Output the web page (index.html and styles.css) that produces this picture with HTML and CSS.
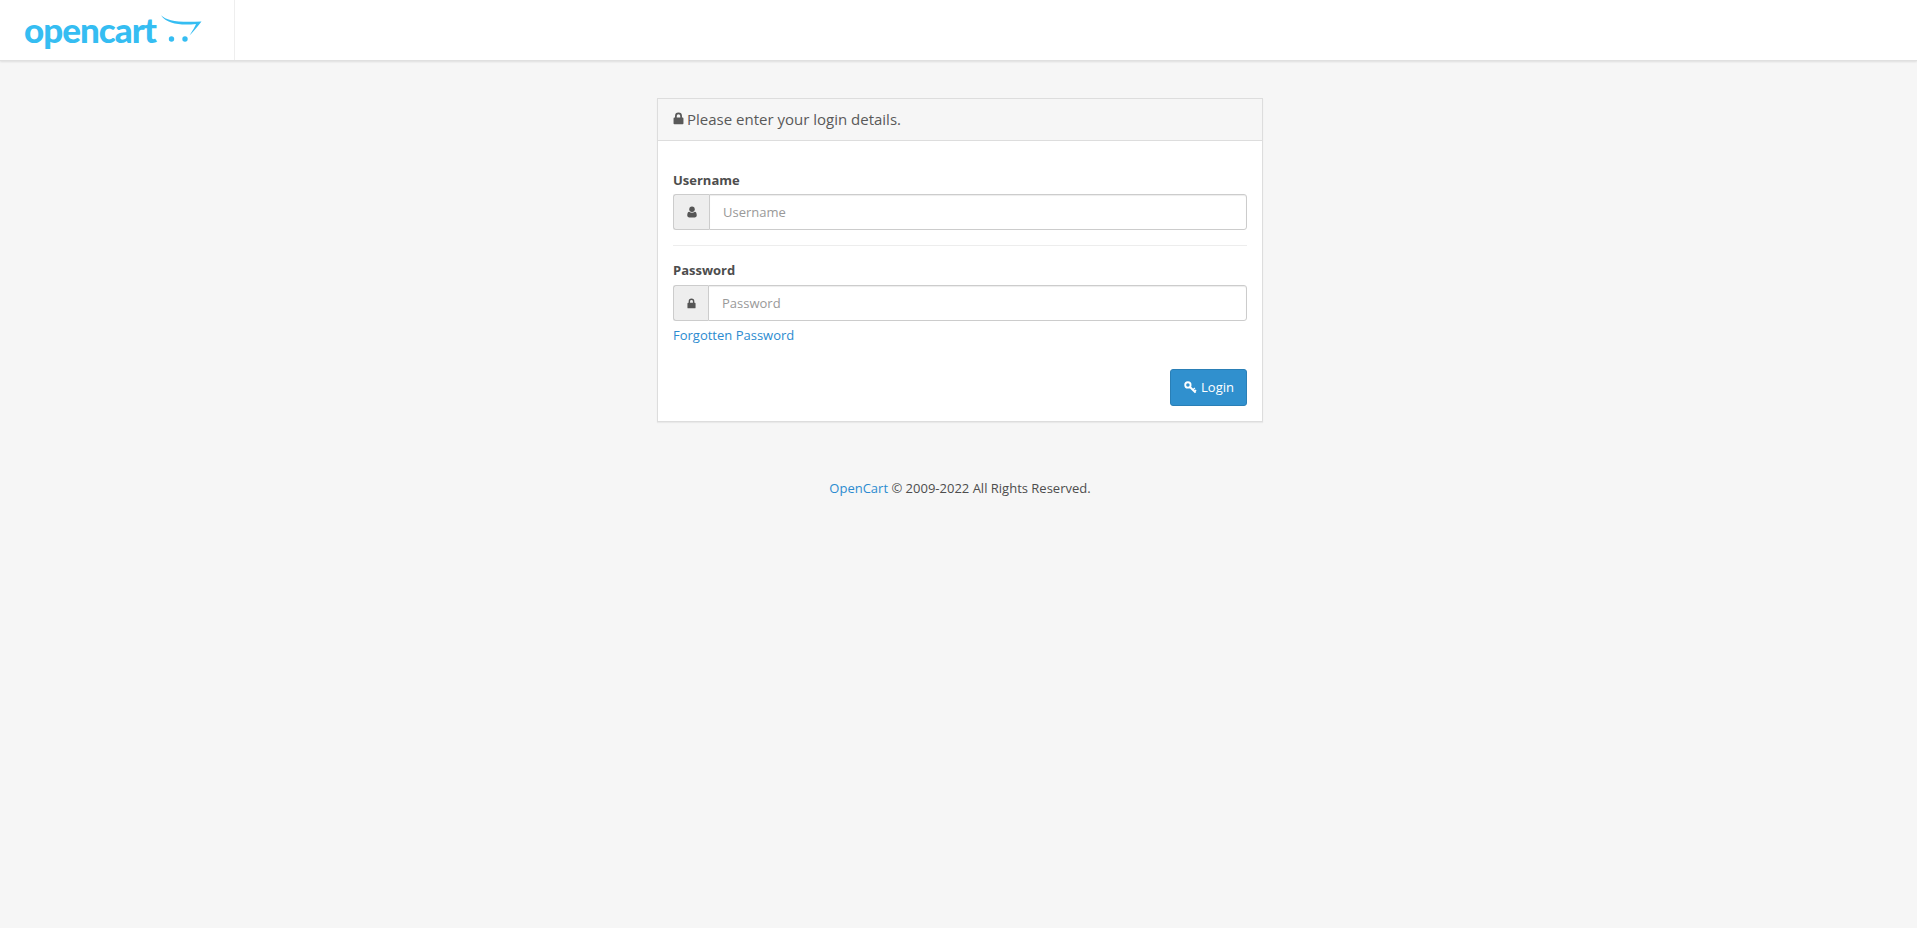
FILE: index.html
```html
<!DOCTYPE html>
<html lang="en">
<head>
<meta charset="utf-8">
<title>OpenCart - Administration</title>
<link rel="stylesheet" href="styles.css">
</head>
<body>
<header class="topbar">
  <a class="brand" href="#">
    <span class="brand-text">opencart</span>
    <svg class="brand-cart" viewBox="0 0 42 30" width="42" height="30" aria-hidden="true">
      <path d="M1 0.3C7 6 17 7.500 41.500 6.500C36.500 13 32.500 17.500 29.500 20.500C32.500 15.500 35 12 36 9C22 10.500 7 9.500 1 0.300Z" fill="#35bdf2"/>
      <circle cx="11.500" cy="24" r="2.700" fill="#35bdf2"/>
      <circle cx="25" cy="24" r="2.700" fill="#35bdf2"/>
    </svg>
  </a>
</header>
<main class="content">
  <section class="card">
    <h1 class="card-head">
      <svg class="icon icon-head" viewBox="0 0 12 14" aria-hidden="true"><path fill-rule="evenodd" d="M2.200 6V4.200a3.800 3.800 0 0 1 7.600 0V6h.7c.5 0 .9.4.9.9v5.600c0 .5-.4.9-.9.9h-9c-.5 0-.9-.4-.9-.9V6.900c0-.5.4-.9.9-.9zM4.100 6h3.800V4.200a1.900 1.900 0 0 0-3.800 0z"/></svg>
      Please enter your login details.
    </h1>
    <form class="card-body">
      <div class="field field-user">
        <label class="field-label" for="u">Username</label>
        <div class="input-group">
          <span class="addon addon-user">
            <svg class="icon icon-user" viewBox="0 0 12 14" aria-hidden="true"><circle cx="6" cy="3.600" r="3.300"/><path d="M2.600 6.700C3.500 7.600 4.700 8 6 8s2.500-.4 3.400-1.300c1.500.2 2.300 1.800 2.300 4.300 0 1.700-1 2.600-2.500 2.600H2.800C1.300 13.600.3 12.700.3 11c0-2.500.8-4.100 2.300-4.300z"/></svg>
          </span>
          <input class="text-input" id="u" type="text" placeholder="Username">
        </div>
      </div>
      <div class="field field-pass">
        <label class="field-label" for="p">Password</label>
        <div class="input-group">
          <span class="addon addon-pass">
            <svg class="icon icon-small" viewBox="0 0 12 14" aria-hidden="true"><path fill-rule="evenodd" d="M2.200 6V4.200a3.800 3.800 0 0 1 7.600 0V6h.7c.5 0 .9.4.9.9v5.600c0 .5-.4.9-.9.9h-9c-.5 0-.9-.4-.9-.9V6.900c0-.5.4-.9.9-.9zM4.100 6h3.800V4.200a1.900 1.900 0 0 0-3.800 0z"/></svg>
          </span>
          <input class="text-input" id="p" type="password" placeholder="Password">
        </div>
        <a class="link forgot" href="#">Forgotten Password</a>
      </div>
      <div class="actions">
        <button class="btn" type="button">
          <svg class="icon icon-key" viewBox="0 0 14 14" aria-hidden="true"><g fill="none" stroke="currentColor"><circle cx="4.200" cy="4.200" r="2.900" stroke-width="2"/><path d="M6.400 6.400L12.500 12.500" stroke-width="2.100"/><path d="M9.600 9.600L11.600 7.600M11.300 11.300L13 9.600" stroke-width="1.500"/></g></svg>
          Login
        </button>
      </div>
    </form>
  </section>
  <footer class="footer"><a class="link" href="#">OpenCart</a> © 2009-2022 All Rights Reserved.</footer>
</main>
</body>
</html>
```
FILE: styles.css
```css
* { box-sizing: border-box; }
html, body { height: 100%; }
body {
  margin: 0;
  background: #f6f6f6;
  color: #4d4d4d;
  font-family: "Open Sans", sans-serif;
  font-size: 13px;
  line-height: 18px;
}
.topbar {
  height: 61px;
  background: #fff;
  border-bottom: 1px solid #e0e0e0;
  box-shadow: 0 1px 2px rgba(0, 0, 0, 0.1);
}
.brand {
  display: flex;
  align-items: flex-start;
  width: 235px;
  height: 60px;
  padding: 13px 0 0 24px;
  border-right: 1px solid #eeeeee;
  text-decoration: none;
}
.brand-text {
  font-family: "Lato", sans-serif;
  font-weight: 900;
  font-size: 35px;
  line-height: 32px;
  letter-spacing: -1px;
  color: #35bdf2;
}
.brand-cart { margin: 2px 0 0 4px; flex: none; }
.content { display: flex; flex-direction: column; padding-top: 37px; padding-left: 657px; }
.card {
  width: 606px;
  background: #fff;
  border: 1px solid #dddddd;
  box-shadow: 0 1px 1px rgba(0, 0, 0, 0.05);
}
.card-head {
  display: flex;
  align-items: center;
  gap: 3px;
  height: 42px;
  margin: 0;
  padding: 0 15px 2px;
  background: #f6f6f6;
  border-bottom: 1px solid #dddddd;
  font-size: 15px;
  font-weight: 400;
  color: #595959;
}
.icon { display: block; fill: currentColor; flex: none; }
.icon-head { width: 11px; height: 13px; }
.icon-small { width: 9px; height: 11px; }
.icon-user { width: 10px; height: 12px; }
.icon-key { width: 13px; height: 13px; }
.card-body { padding: 15px; }
.field-user { padding: 15px 0; border-bottom: 1px solid #ededed; }
.field-pass { padding: 15px 0 16px; }
.field-label { display: block; font-weight: 700; color: #4d4d4d; }
.field-user .field-label { margin-bottom: 5px; }
.field-pass .field-label { margin-bottom: 6px; }
.input-group { display: flex; height: 36px; }
.addon {
  display: flex;
  align-items: center;
  justify-content: center;
  background: #eeeeee;
  border: 1px solid #cccccc;
  border-right: 0;
  border-radius: 3px 0 0 3px;
  color: #555555;
  flex: none;
}
.addon-user { width: 36px; }
.addon-pass { width: 35px; }
.text-input {
  flex: 1;
  min-width: 0;
  padding: 0 13px;
  border: 1px solid #cccccc;
  border-radius: 0 3px 3px 0;
  background: #fff;
  color: #555555;
  font: 13px/18px "Open Sans", sans-serif;
  outline: 0;
  box-shadow: inset 0 1px 1px rgba(0, 0, 0, 0.075);
}
.text-input::placeholder { color: #999999; opacity: 1; }
.link { color: #2b8bd0; text-decoration: none; }
.forgot { display: block; margin-top: 5px; }
.actions { display: flex; justify-content: flex-end; padding-top: 9px; }
.btn {
  display: flex;
  align-items: center;
  gap: 4px;
  height: 37px;
  padding: 0 12px 1px 13px;
  background: #3090ce;
  border: 1px solid #2a7fb6;
  border-radius: 3px;
  color: #fff;
  font: 13px/18px "Open Sans", sans-serif;
  cursor: pointer;
}
.footer { width: 606px; margin-top: 57px; text-align: center; }
```
